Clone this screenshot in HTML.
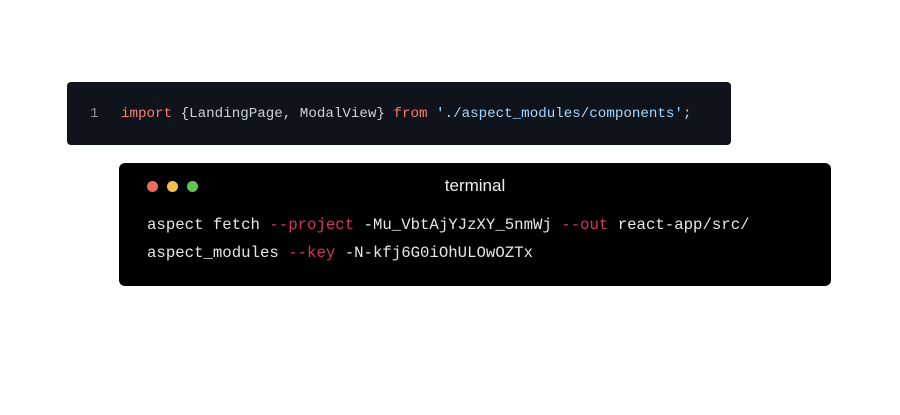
<!DOCTYPE html>
<html><head><style>
body{margin:0;width:900px;height:415px;background:#fff;position:relative;overflow:hidden}
.code{position:absolute;left:67px;top:82px;width:664px;height:63px;background:#0f141c;border-radius:4px}
.mono{font-family:"Liberation Mono",monospace}
.cl{position:absolute;top:105px;font-size:14.2px;color:#c9d1d9;white-space:pre;line-height:18px}
.kw{color:#ff7b72}.str{color:#a5d6ff}
.term{position:absolute;left:119px;top:163px;width:712px;height:123px;background:#000;border-radius:6px}
.dot{position:absolute;top:181px;width:11px;height:11px;border-radius:50%}
.title{position:absolute;left:400px;width:150px;text-align:center;top:176px;color:#f0f0f0;font:17px "Liberation Sans",sans-serif}
.tl{position:absolute;left:147px;font-size:15.7px;color:#e6e6e6;white-space:pre;line-height:20px}
.fl{color:#d6336c}
</style></head><body>
<div class="code"></div>
<div class="cl mono" style="left:90px;color:#8b949e">1</div>
<div class="cl mono" style="left:121px"><span class="kw">import</span> {LandingPage, ModalView} <span class="kw">from</span> <span class="str">'./aspect_modules/components'</span>;</div>
<div class="term"></div>
<div class="dot" style="left:147px;background:#ed6a5e"></div>
<div class="dot" style="left:167px;background:#f4bf4f"></div>
<div class="dot" style="left:187px;background:#61c554"></div>
<div class="title">terminal</div>
<div class="tl mono" style="top:215px">aspect fetch <span class="fl">--project</span> -Mu_VbtAjYJzXY_5nmWj <span class="fl">--out</span> react-app/src/</div>
<div class="tl mono" style="top:243px">aspect_modules <span class="fl">--key</span> -N-kfj6G0iOhULOwOZTx</div>
</body></html>
